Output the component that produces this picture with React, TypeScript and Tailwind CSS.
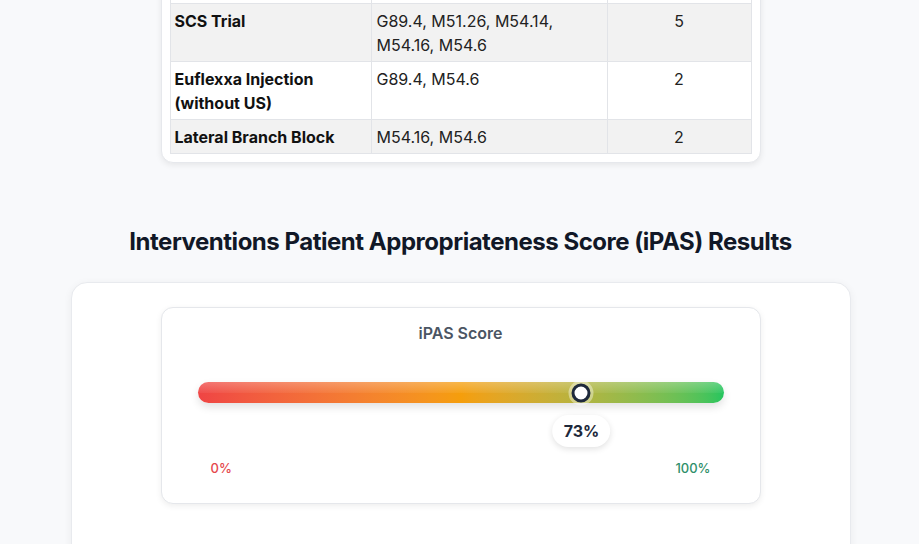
import React from "react";

type Row = { name: string[]; codes: string[]; count: number; shaded: boolean };

const rows: Row[] = [
  { name: ["SCS Trial"], codes: ["G89.4, M51.26, M54.14,", "M54.16, M54.6"], count: 5, shaded: true },
  { name: ["Euflexxa Injection", "(without US)"], codes: ["G89.4, M54.6"], count: 2, shaded: false },
  { name: ["Lateral Branch Block"], codes: ["M54.16, M54.6"], count: 2, shaded: true },
];

const score = 73;

function Lines({ items }: { items: string[] }) {
  return (
    <>
      {items.map((t, i) => (
        <div key={i}>{t}</div>
      ))}
    </>
  );
}

export default function App() {
  return (
    <div
      className="h-[544px] w-[921px] overflow-hidden bg-[#f8f9fb] text-[#1a1a1a]"
      style={{ fontFamily: "Inter, 'Noto Sans', 'Liberation Sans', sans-serif" }}
    >
      {/* Procedure summary table (list continues above the fold) */}
      <div className="mx-auto -mt-[49px] w-[600px] rounded-xl border border-[#e6e8ec] bg-white p-2 shadow-[0_2px_6px_rgba(0,0,0,0.08)]">
        <table className="w-full border-collapse text-[16px] leading-6">
          <colgroup>
            <col className="w-[201px]" />
            <col className="w-[236px]" />
            <col />
          </colgroup>
          <tbody>
            <tr className="bg-white">
              <td className="h-[43px] border border-[#e2e4e8]" />
              <td className="border border-[#e2e4e8]" />
              <td className="border border-[#e2e4e8]" />
            </tr>
            {rows.map((r, i) => (
              <tr key={i} className={r.shaded ? "bg-[#f2f2f2]" : "bg-white"}>
                <td className="border border-[#e2e4e8] px-1 py-[4.5px] align-top font-bold text-[#111]">
                  <Lines items={r.name} />
                </td>
                <td className="border border-[#e2e4e8] px-[5px] py-[4.5px] align-top text-[#222]">
                  <Lines items={r.codes} />
                </td>
                <td className="border border-[#e2e4e8] px-1 py-[4.5px] text-center align-top text-[#222]">
                  {r.count}
                </td>
              </tr>
            ))}
          </tbody>
        </table>
      </div>

      <h2 className="mt-[63px] text-center text-[24px] font-bold leading-8 tracking-[-0.02em] text-[#111827]">
        Interventions Patient Appropriateness Score (iPAS) Results
      </h2>

      <div className="mx-auto mt-6 w-[780px] rounded-2xl border border-[#e8eaee] bg-white px-6 pt-6 pb-16 shadow-[0_2px_8px_rgba(0,0,0,0.06)]">
        <div className="mx-auto w-[600px] rounded-xl border border-[#e5e7eb] bg-white px-9 pt-[15px] pb-[25px] shadow-[0_2px_6px_rgba(0,0,0,0.07)]">
          <div className="text-center text-[16px] font-semibold leading-5 text-[#4b5563]">iPAS Score</div>

          <div className="relative mt-[39px]">
            <div className="relative h-[21px] overflow-hidden rounded-full bg-gradient-to-r from-[#ef4444] via-[#f59e0b] to-[#22c55e] shadow-[0_4px_8px_rgba(0,0,0,0.12)]">
              <div className="absolute inset-x-0 top-0 h-1/2 bg-gradient-to-b from-white/25 to-white/5" />
            </div>
            <div
              className="absolute top-[10.5px] h-[25px] w-[25px] -translate-x-1/2 -translate-y-1/2 rounded-full bg-white/40"
              style={{ left: `${score}%` }}
            >
              <div className="m-[3px] h-[19px] w-[19px] rounded-full border-[3px] border-[#1e293b] bg-white" />
            </div>
            <div
              className="absolute top-[33px] -translate-x-1/2 rounded-full bg-white px-[11px] py-[5px] text-[16px] font-bold leading-[22px] text-[#1e293b] shadow-[0_2px_6px_rgba(0,0,0,0.12)]"
              style={{ left: `${score}%` }}
            >
              {score}%
            </div>
          </div>

          <div className="mt-[55px] flex justify-between px-[13px] text-[13px] font-medium leading-5">
            <span className="text-[#e5484d]">0%</span>
            <span className="text-[#2f8f6a]">100%</span>
          </div>
        </div>
      </div>
    </div>
  );
}
